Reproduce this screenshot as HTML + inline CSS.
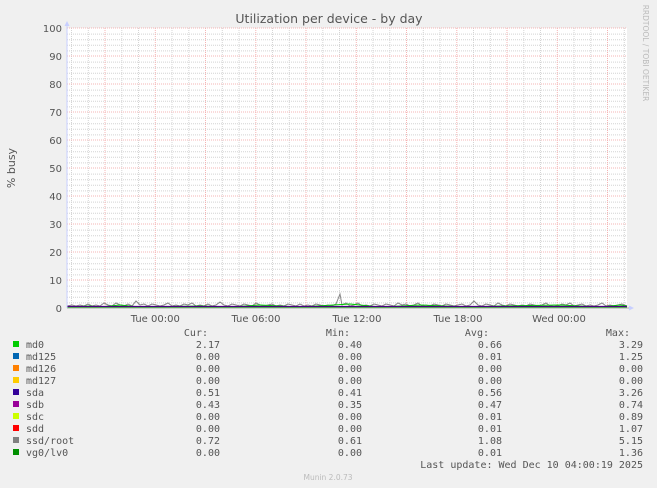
<!DOCTYPE html>
<html><head><meta charset="utf-8"><style>
html,body{margin:0;padding:0;background:#f0f0f0;width:657px;height:488px;overflow:hidden}
svg text{font-family:"DejaVu Sans",sans-serif}
.m{font-family:"DejaVu Sans Mono",monospace;font-size:10px;fill:#555}
</style></head><body>
<svg width="657" height="488" xmlns="http://www.w3.org/2000/svg">
<rect width="657" height="488" fill="#f0f0f0"/>
<rect x="67" y="28" width="560" height="280" fill="#fff"/>
<g stroke="#d4d4d4" stroke-dasharray="1,1" stroke-width="1">
<path d="M67 302.9H627M67 297.3H627M67 291.7H627M67 286.1H627M67 274.9H627M67 269.3H627M67 263.7H627M67 258.1H627M67 246.9H627M67 241.3H627M67 235.7H627M67 230.1H627M67 218.9H627M67 213.3H627M67 207.7H627M67 202.1H627M67 190.9H627M67 185.3H627M67 179.7H627M67 174.1H627M67 162.9H627M67 157.3H627M67 151.7H627M67 146.1H627M67 134.9H627M67 129.3H627M67 123.7H627M67 118.1H627M67 106.9H627M67 101.3H627M67 95.7H627M67 90.1H627M67 78.9H627M67 73.3H627M67 67.7H627M67 62.1H627M67 50.9H627M67 45.3H627M67 39.7H627M67 34.1H627"/>
<path d="M71.5 28V308M88.3 28V308M121.8 28V308M138.5 28V308M172 28V308M188.8 28V308M222.3 28V308M239 28V308M272.5 28V308M289.3 28V308M322.8 28V308M339.5 28V308M373 28V308M389.8 28V308M423.3 28V308M440 28V308M473.5 28V308M490.3 28V308M523.8 28V308M540.5 28V308M574 28V308M590.8 28V308M624.3 28V308"/>
</g>
<g stroke="#f4b4b4" stroke-dasharray="1,1" stroke-width="1">
<path d="M67 280H627M67 252H627M67 224H627M67 196H627M67 168H627M67 140H627M67 112H627M67 84H627M67 56H627M67 28H627"/>
<path d="M105 28V308M155.3 28V308M205.5 28V308M255.8 28V308M306 28V308M356.3 28V308M406.5 28V308M456.8 28V308M507 28V308M557.3 28V308M607.5 28V308"/>
</g>
<polyline fill="none" stroke="#888" stroke-width="1" points="67,306 72,305 76,306 80,305 84,306 88,304 92,306 96,305 100,306 104,303 108,305 112,306 116,303 120,305 124,306 128,304 132,306 136,301 140,305 144,304 148,306 152,304 156,305 160,306 164,305 168,303 172,306 176,305 180,306 184,304 188,305 192,303 196,306 200,305 204,306 208,304 212,306 216,305 220,302 224,305 228,306 232,304 236,305 240,306 244,304 248,305 252,306 256,303 260,305 264,306 268,305 272,304 276,306 280,305 284,306 288,304 292,305 296,306 300,304 304,306 308,305 312,306 316,304 320,305 324,306 328,305 332,306 336,304 340,294 342,305 346,303 350,306 354,305 358,303 362,306 366,305 370,306 374,304 378,305 382,306 386,304 390,305 394,306 398,303 402,305 406,304 410,306 414,305 418,303 422,306 426,305 430,306 434,304 438,305 442,306 446,304 450,305 454,306 458,305 462,304 466,306 470,305 474,301 478,305 482,306 486,304 490,305 494,306 498,303 502,305 506,306 510,304 514,305 518,306 522,305 526,306 530,304 534,305 538,306 542,305 546,303 550,306 554,305 558,306 562,304 566,305 570,303 574,306 578,305 582,304 586,306 590,305 594,306 598,305 602,303 606,306 610,305 614,306 618,305 622,304 627,306"/>
<polyline fill="none" stroke="#0c0" stroke-width="1" points="67,307 90,306 100,307 120,305 140,307 200,306 230,307 260,305 300,307 350,304 380,307 420,305 470,307 500,306 560,305 600,307 620,305 627,306"/>
<line x1="67" y1="306.5" x2="627" y2="306.5" stroke="#4b0082" stroke-width="1.2"/>
<line x1="67" y1="307.5" x2="627" y2="307.5" stroke="#00a000" stroke-width="1"/>
<line x1="67" y1="308" x2="631" y2="308" stroke="#aaa"/>
<line x1="67" y1="24" x2="67" y2="308" stroke="#c8cfff"/>
<path d="M64.5 26L67 21L69.5 26Z" fill="#c8cfff"/>
<path d="M629 305.5L634 308L629 310.5Z" fill="#c8cfff"/>
<g font-size="10" fill="#555" text-anchor="end">
<text x="62" y="312">0</text><text x="62" y="284">10</text><text x="62" y="256">20</text><text x="62" y="228">30</text><text x="62" y="200">40</text><text x="62" y="172">50</text><text x="62" y="144">60</text><text x="62" y="116">70</text><text x="62" y="88">80</text><text x="62" y="60">90</text><text x="62" y="32">100</text>
</g>
<g font-size="10" fill="#555" text-anchor="middle">
<text x="155.3" y="322">Tue 00:00</text><text x="256" y="322">Tue 06:00</text><text x="357" y="322">Tue 12:00</text><text x="458" y="322">Tue 18:00</text><text x="559" y="322">Wed 00:00</text>
</g>
<text x="329" y="23" font-size="12.5" fill="#555" text-anchor="middle">Utilization per device - by day</text>
<text transform="translate(15,168) rotate(-90)" font-size="11" fill="#555" text-anchor="middle">% busy</text>
<text transform="translate(643,53) rotate(90)" font-size="7.5" fill="#bbb" text-anchor="middle">RRDTOOL / TOBI OETIKER</text>
<g text-anchor="end">
<text x="208" y="336" class="m">Cur:</text><text x="350" y="336" class="m">Min:</text><text x="489" y="336" class="m">Avg:</text><text x="630" y="336" class="m">Max:</text>
</g>
<g>
<rect x="13" y="341" width="6" height="6" fill="#00cc00"/>
<rect x="13" y="353" width="6" height="6" fill="#0066b3"/>
<rect x="13" y="365" width="6" height="6" fill="#ff8000"/>
<rect x="13" y="377" width="6" height="6" fill="#ffcc00"/>
<rect x="13" y="389" width="6" height="6" fill="#330099"/>
<rect x="13" y="401" width="6" height="6" fill="#990099"/>
<rect x="13" y="413" width="6" height="6" fill="#ccff00"/>
<rect x="13" y="425" width="6" height="6" fill="#ff0000"/>
<rect x="13" y="437" width="6" height="6" fill="#808080"/>
<rect x="13" y="449" width="6" height="6" fill="#008f00"/>
</g>
<g>
<text x="26" y="348" class="m">md0</text><text x="26" y="360" class="m">md125</text><text x="26" y="372" class="m">md126</text><text x="26" y="384" class="m">md127</text><text x="26" y="396" class="m">sda</text><text x="26" y="408" class="m">sdb</text><text x="26" y="420" class="m">sdc</text><text x="26" y="432" class="m">sdd</text><text x="26" y="444" class="m">ssd/root</text><text x="26" y="456" class="m">vg0/lv0</text>
</g>
<g text-anchor="end">
<text class="m" x="220" y="348">2.17</text><text class="m" x="362" y="348">0.40</text><text class="m" x="502" y="348">0.66</text><text class="m" x="643" y="348">3.29</text>
<text class="m" x="220" y="360">0.00</text><text class="m" x="362" y="360">0.00</text><text class="m" x="502" y="360">0.01</text><text class="m" x="643" y="360">1.25</text>
<text class="m" x="220" y="372">0.00</text><text class="m" x="362" y="372">0.00</text><text class="m" x="502" y="372">0.00</text><text class="m" x="643" y="372">0.00</text>
<text class="m" x="220" y="384">0.00</text><text class="m" x="362" y="384">0.00</text><text class="m" x="502" y="384">0.00</text><text class="m" x="643" y="384">0.00</text>
<text class="m" x="220" y="396">0.51</text><text class="m" x="362" y="396">0.41</text><text class="m" x="502" y="396">0.56</text><text class="m" x="643" y="396">3.26</text>
<text class="m" x="220" y="408">0.43</text><text class="m" x="362" y="408">0.35</text><text class="m" x="502" y="408">0.47</text><text class="m" x="643" y="408">0.74</text>
<text class="m" x="220" y="420">0.00</text><text class="m" x="362" y="420">0.00</text><text class="m" x="502" y="420">0.01</text><text class="m" x="643" y="420">0.89</text>
<text class="m" x="220" y="432">0.00</text><text class="m" x="362" y="432">0.00</text><text class="m" x="502" y="432">0.01</text><text class="m" x="643" y="432">1.07</text>
<text class="m" x="220" y="444">0.72</text><text class="m" x="362" y="444">0.61</text><text class="m" x="502" y="444">1.08</text><text class="m" x="643" y="444">5.15</text>
<text class="m" x="220" y="456">0.00</text><text class="m" x="362" y="456">0.00</text><text class="m" x="502" y="456">0.01</text><text class="m" x="643" y="456">1.36</text>
<text class="m" x="643" y="468">Last update: Wed Dec 10 04:00:19 2025</text>
</g>
<text x="328" y="480" font-size="7.5" fill="#bbb" text-anchor="middle">Munin 2.0.73</text>
</svg>
</body></html>
